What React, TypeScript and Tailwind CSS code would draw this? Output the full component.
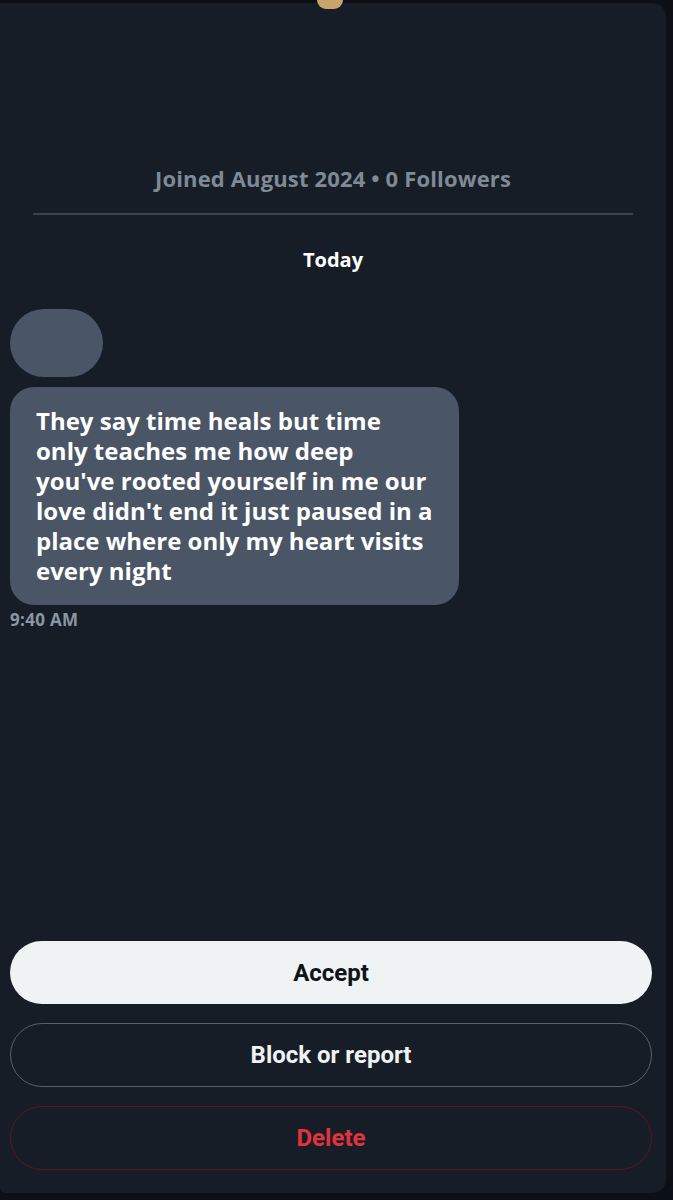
export default function App() {
  const font = { fontFamily: '"Open Sans", "Liberation Sans", sans-serif' };
  const lines = [
    "They say time heals but time",
    "only teaches me how deep",
    "you've rooted yourself in me our",
    "love didn't end it just paused in a",
    "place where only my heart visits",
    "every night",
  ];
  return (
    <div className="w-[673px] h-[1200px] bg-[#0c1016] overflow-hidden" style={font}>
      <div className="relative w-[666px] h-[1190px] mt-[3px] bg-[#171d26] rounded-r-[14px] rounded-bl-[6px] flex flex-col">
        <div className="absolute left-[317px] top-[-3px] w-[26px] h-[9px] rounded-b-full bg-[#c9a46a]" />
        <div className="pt-[160px] text-center text-[22px] leading-[30px] font-bold text-[#7e8a96] tracking-[0.15px]">
          Joined August 2024 • 0 Followers
        </div>
        <div className="mx-[33px] mt-[20px] h-[2px] bg-[#3a434e]" />
        <div className="mt-[30px] text-center text-[20px] font-bold text-white">Today</div>
        <div className="mt-[34px] ml-[10px] w-[93px] h-[68px] rounded-[34px] bg-[#4a5566]" />
        <div className="mt-[10px] ml-[10px] w-[449px] rounded-[24px] bg-[#4a5566] pl-[26px] pt-[19px] pb-[19px] text-[24px] leading-[30px] font-bold text-white">
          {lines.map((l) => (
            <div key={l} className="whitespace-nowrap">{l}</div>
          ))}
        </div>
        <div className="mt-[5px] ml-[10px] text-[17px] leading-[20px] font-bold text-[#8a96a3] tracking-[0.3px]">9:40 AM</div>
        <div className="flex-1" />
        <div className="flex flex-col gap-[19px] pl-[10px] pr-[14px] pb-[23px]" style={{ fontFamily: 'Roboto, "Liberation Sans", sans-serif' }}>
          <div className="h-[63px] rounded-full bg-[#eff3f4] flex items-center justify-center text-[24px] font-bold text-[#0f1419]">
            Accept
          </div>
          <div className="h-[64px] rounded-full border border-[#566270] flex items-center justify-center text-[24px] font-bold text-[#eff3f4]">
            Block or report
          </div>
          <div className="h-[64px] rounded-full border border-[#5a1620] flex items-center justify-center text-[24px] font-bold text-[#e0333d]">
            Delete
          </div>
        </div>
      </div>
    </div>
  );
}
